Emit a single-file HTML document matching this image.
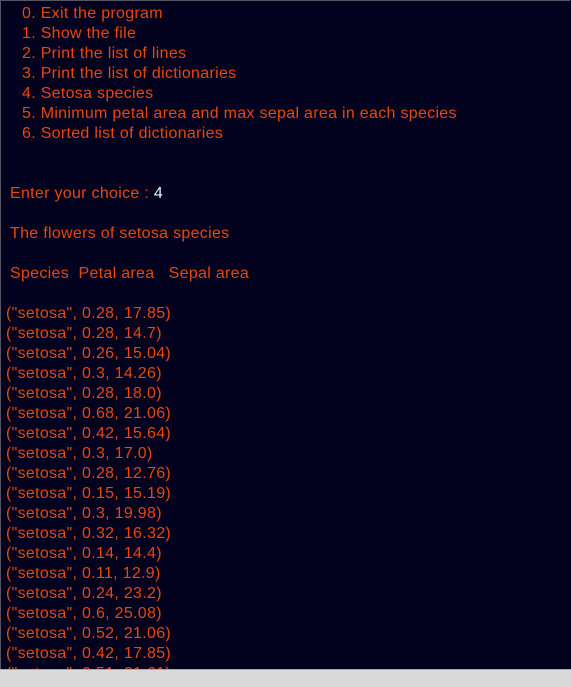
<!DOCTYPE html>
<html><head><style>
html,body{margin:0;padding:0;}
body{width:571px;height:686px;background:#02021e;position:relative;overflow:hidden;font-family:"Liberation Sans",sans-serif;font-size:16px;color:#e8470f;}
.l{position:absolute;height:20px;line-height:20px;white-space:pre;letter-spacing:0.3px;margin-top:2px;}
.bar{position:absolute;left:0;top:669px;width:571px;height:17px;background:#d9d9d9;border-top:1px solid #aaa;}
.frame{position:absolute;left:0;top:0;width:570px;height:669px;border-top:1px solid #556;border-left:1px solid #556;box-sizing:border-box;}
</style></head><body>
<div class="frame"></div>
<div class="l" style="left:22px;top:2px">0. Exit the program</div>
<div class="l" style="left:22px;top:22px">1. Show the file</div>
<div class="l" style="left:22px;top:42px">2. Print the list of lines</div>
<div class="l" style="left:22px;top:62px">3. Print the list of dictionaries</div>
<div class="l" style="left:22px;top:82px">4. Setosa species</div>
<div class="l" style="left:22px;top:102px">5. Minimum petal area and max sepal area in each species</div>
<div class="l" style="left:22px;top:122px">6. Sorted list of dictionaries</div>
<div class="l" style="left:10px;top:182px">Enter your choice : <span style="color:#e8f0ff">4</span></div>
<div class="l" style="left:10px;top:222px">The flowers of setosa species</div>
<div class="l" style="left:10px;top:262px">Species  Petal area   Sepal area</div>
<div class="l" style="left:6px;top:302px">("setosa", 0.28, 17.85)</div>
<div class="l" style="left:6px;top:322px">("setosa", 0.28, 14.7)</div>
<div class="l" style="left:6px;top:342px">("setosa", 0.26, 15.04)</div>
<div class="l" style="left:6px;top:362px">("setosa", 0.3, 14.26)</div>
<div class="l" style="left:6px;top:382px">("setosa", 0.28, 18.0)</div>
<div class="l" style="left:6px;top:402px">("setosa", 0.68, 21.06)</div>
<div class="l" style="left:6px;top:422px">("setosa", 0.42, 15.64)</div>
<div class="l" style="left:6px;top:442px">("setosa", 0.3, 17.0)</div>
<div class="l" style="left:6px;top:462px">("setosa", 0.28, 12.76)</div>
<div class="l" style="left:6px;top:482px">("setosa", 0.15, 15.19)</div>
<div class="l" style="left:6px;top:502px">("setosa", 0.3, 19.98)</div>
<div class="l" style="left:6px;top:522px">("setosa", 0.32, 16.32)</div>
<div class="l" style="left:6px;top:542px">("setosa", 0.14, 14.4)</div>
<div class="l" style="left:6px;top:562px">("setosa", 0.11, 12.9)</div>
<div class="l" style="left:6px;top:582px">("setosa", 0.24, 23.2)</div>
<div class="l" style="left:6px;top:602px">("setosa", 0.6, 25.08)</div>
<div class="l" style="left:6px;top:622px">("setosa", 0.52, 21.06)</div>
<div class="l" style="left:6px;top:642px">("setosa", 0.42, 17.85)</div>
<div class="l" style="left:6px;top:662px">("setosa", 0.51, 21.61)</div>
<div class="bar"></div>
</body></html>
